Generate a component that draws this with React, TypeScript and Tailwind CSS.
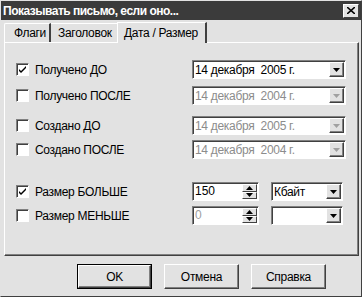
import React from "react";

const font = { fontFamily: '"Liberation Sans", Arial, sans-serif' };

function CheckBox({ checked, label }: { checked?: boolean; label: string }) {
  return (
    <div className="flex items-center h-[19px] pl-[11px]">
      <div className="w-[13px] h-[13px] bg-white border border-t-[#808080] border-l-[#808080] border-b-white border-r-white shadow-[inset_1px_1px_0_#404040] flex items-center justify-center">
        {checked && (
          <svg width="9" height="9" viewBox="0 0 9 9">
            <path d="M1 4 L3 6 L8 1 L8 3 L3 8 L1 6 Z" fill="#000" />
          </svg>
        )}
      </div>
      <span className="ml-[6px] text-[12px] tracking-[-0.3px] text-black">{label}</span>
    </div>
  );
}

function Arrow({ disabled, dir = "down" }: { disabled?: boolean; dir?: "up" | "down" }) {
  const c = disabled ? "#a0a0a0" : "#000";
  return (
    <svg width="7" height="4" viewBox="0 0 7 4">
      {dir === "down" ? <path d="M0 0 H7 L3.5 4 Z" fill={c} /> : <path d="M0 4 H7 L3.5 0 Z" fill={c} />}
    </svg>
  );
}

function Select({ value, disabled, width }: { value: string; disabled?: boolean; width: string }) {
  return (
    <div
      className={`${width} h-[19px] bg-white border border-t-[#808080] border-l-[#808080] border-b-white border-r-white shadow-[inset_1px_1px_0_#404040] flex items-center pl-[2px] pr-[1px]`}
    >
      <span className={`flex-1 text-[12px] tracking-[-0.3px] whitespace-pre leading-none ${disabled ? "text-[#8c8c8c]" : "text-black"}`}>{value}</span>
      <div className="w-[15px] h-[15px] bg-[#e2e2e2] border border-t-white border-l-white border-b-[#404040] border-r-[#404040] shadow-[inset_-1px_-1px_0_#808080] flex items-center justify-center">
        <Arrow disabled={disabled} />
      </div>
    </div>
  );
}

function Spin({ value, disabled }: { value: string; disabled?: boolean }) {
  return (
    <div className="w-[67px] h-[19px] bg-white border border-t-[#808080] border-l-[#808080] border-b-white border-r-white shadow-[inset_1px_1px_0_#404040] flex items-stretch pl-[2px] pr-[1px] py-[1px]">
      <span className={`flex-1 text-[12px] leading-[15px] ${disabled ? "text-[#a0a0a0]" : "text-black"}`}>{value}</span>
      <div className="w-[15px] flex flex-col">
        <div className="flex-1 bg-[#e2e2e2] border border-t-white border-l-white border-b-[#404040] border-r-[#404040] flex items-center justify-center">
          <Arrow dir="up" />
        </div>
        <div className="flex-1 bg-[#e2e2e2] border border-t-white border-l-white border-b-[#404040] border-r-[#404040] flex items-center justify-center">
          <Arrow />
        </div>
      </div>
    </div>
  );
}

function Btn({ label, def }: { label: string; def?: boolean }) {
  return (
    <div className={`${def ? "border border-black" : ""} w-[75px] h-[25px]`}>
      <div className="w-full h-full bg-[#e2e2e2] border border-t-white border-l-white border-b-[#404040] border-r-[#404040] shadow-[inset_-1px_-1px_0_#808080] flex items-center justify-center text-[12px] tracking-[-0.3px] text-black">
        {label}
      </div>
    </div>
  );
}

export default function App() {
  return (
    <div style={font} className="w-[362px] h-[297px] bg-[#e2e2e2] border border-t-[#e2e2e2] border-l-[#e2e2e2] border-b-[#404040] border-r-[#404040] flex flex-col select-none">
      <div className="h-[19px] bg-[#3b3b3b] flex items-center justify-between pl-[2px] pr-[2px]">
        <span className="text-white font-bold text-[12px] tracking-[-0.5px]">Показывать письмо, если оно...</span>
        <div className="w-[16px] h-[14px] bg-[#e2e2e2] border border-t-white border-l-white border-b-[#404040] border-r-[#404040] flex items-center justify-center">
          <svg width="8" height="7" viewBox="0 0 8 7">
            <path d="M0 0 L8 7 M8 0 L0 7" stroke="#000" strokeWidth="1.6" />
          </svg>
        </div>
      </div>

      <div className="flex items-end pl-[3px] mt-[1px] h-[21px] text-[12px] tracking-[-0.3px]">
        <div className="w-[47px] h-[19px] pl-[9px] border-t border-l border-white border-r-2 border-r-[#404040] rounded-tl-[2px] flex items-center">Флаги</div>
        <div className="w-[66px] h-[19px] pl-[7px] border-t border-white flex items-center">Заголовок</div>
        <div className="w-[90px] h-[21px] pl-[6px] border-t border-l border-white border-r-2 border-r-[#404040] -mb-[1px] bg-[#e2e2e2] relative z-10 flex items-center">Дата / Размер</div>
      </div>

      <div className="mx-[3px] w-[355px] h-[214px] border border-t-white border-l-white border-b-[#404040] border-r-[#404040] shadow-[inset_-1px_-1px_0_#808080]">
        <div className="flex pt-[17px]">
          <div className="w-[187px] flex flex-col">
            <CheckBox checked label="Получено ДО" />
            <div className="mt-[7px]"><CheckBox label="Получено ПОСЛЕ" /></div>
            <div className="mt-[11px]"><CheckBox label="Создано ДО" /></div>
            <div className="mt-[5px]"><CheckBox label="Создано ПОСЛЕ" /></div>
            <div className="mt-[23px]"><CheckBox checked label="Размер БОЛЬШЕ" /></div>
            <div className="mt-[5px]"><CheckBox label="Размер МЕНЬШЕ" /></div>
          </div>
          <div className="flex flex-col">
            <Select width="w-[154px]" value="14 декабря  2005 г." />
            <div className="mt-[7px]"><Select width="w-[154px]" disabled value="14 декабря  2004 г." /></div>
            <div className="mt-[11px]"><Select width="w-[154px]" disabled value="14 декабря  2005 г." /></div>
            <div className="mt-[5px]"><Select width="w-[154px]" disabled value="14 декабря  2004 г." /></div>
            <div className="mt-[23px] flex gap-[12px]">
              <Spin value="150" />
              <Select width="w-[72px]" value="Кбайт" />
            </div>
            <div className="mt-[5px] flex gap-[12px]">
              <Spin disabled value="0" />
              <Select width="w-[72px]" value="" />
            </div>
          </div>
        </div>
      </div>

      <div className="flex justify-end gap-[12px] pr-[35px] mt-[8px]">
        <Btn def label="OK" />
        <Btn label="Отмена" />
        <Btn label="Справка" />
      </div>
    </div>
  );
}
